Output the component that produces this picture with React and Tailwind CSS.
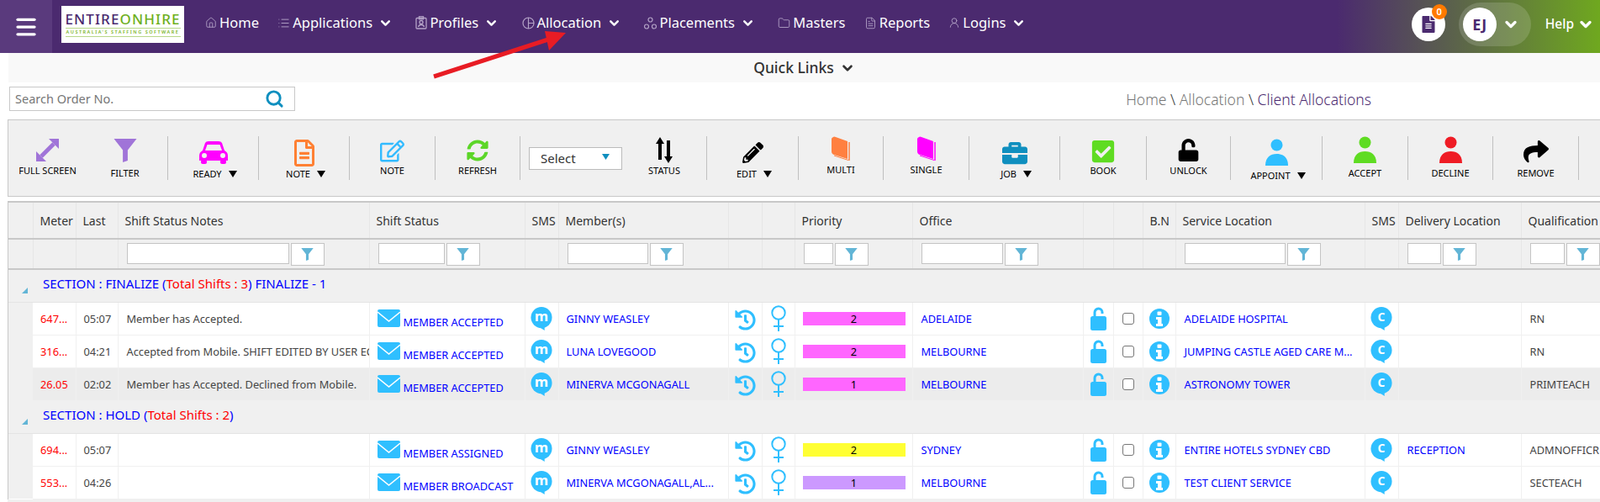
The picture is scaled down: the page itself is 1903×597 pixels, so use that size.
import React from "react";
import { ChevronDown, House, List, Folder, FileText, UserRound, Menu, Search } from "lucide-react";
import { FaRegEdit, FaSyncAlt, FaPencilAlt, FaCheckSquare, FaUnlock, FaShare, FaHistory, FaRegFileAlt, FaFileAlt, FaBriefcase } from "react-icons/fa";

const nav = [
  { t: "Home", i: <House size={14} strokeWidth={1.5} /> },
  { t: "Applications", c: 1, i: <List size={15} strokeWidth={1.5} /> },
  { t: "Profiles", c: 1, i: (
    <svg width="14" height="16" viewBox="0 0 14 16" fill="none" stroke="currentColor" strokeWidth="1.3"><rect x="1" y="2.5" width="12" height="12.5" rx="1" /><rect x="4.5" y="0.8" width="5" height="3" /><circle cx="7" cy="7.5" r="2" /><path d="M3.5 13c.5-2 2-2.5 3.500-2.500s3 .5 3.500 2.500" /></svg>
  ) },
  { t: "Allocation", c: 1, i: (
    <svg width="15" height="15" viewBox="0 0 15 15" fill="none" stroke="currentColor" strokeWidth="1.2"><circle cx="7.500" cy="7.500" r="6.500" /><path d="M7.500 1v13M7.500 7.500h6.500" /></svg>
  ) },
  { t: "Placements", c: 1, i: (
    <svg width="15" height="15" viewBox="0 0 15 15" fill="none" stroke="currentColor" strokeWidth="1.2"><circle cx="7.500" cy="3.500" r="2.500" /><circle cx="3" cy="11.500" r="2.500" /><circle cx="12" cy="11.500" r="2.500" /></svg>
  ) },
  { t: "Masters", i: <Folder size={15} strokeWidth={1.4} /> },
  { t: "Reports", i: <FileText size={15} strokeWidth={1.4} /> },
  { t: "Logins", c: 1, i: <UserRound size={14} strokeWidth={1.5} /> },
];

function Caret() {
  return <svg width="10" height="8" viewBox="0 0 10 8" className="ml-[8px] shrink-0"><path d="M0 0h10L5 8z" fill="#000" /></svg>;
}

function Funnel({ size = 28, color = "#a074d8" }) {
  return (
    <svg width={size} height={size} viewBox="0 0 28 29"><path d="M0 0h28L17 14v13l-6 2V14z" fill={color} /></svg>
  );
}

function Person({ color }) {
  return (
    <svg width="27" height="32" viewBox="0 0 27 32"><circle cx="13.500" cy="7.500" r="7" fill={color} /><path d="M0 32c0-10 6-14 13.500-14S27 22 27 32z" fill={color} /></svg>
  );
}

function Book({ color }) {
  return (
    <svg width="22" height="29" viewBox="0 0 22 29">
      <path d="M2 1Q3 0 5 1L19 6V27L3 22Q0 21 0 18V3Q0 2 2 1z" fill={color} />
      <path d="M21 7V29" stroke={color} strokeWidth="1.500" />
      <path d="M3 23L20 28.500" stroke={color} strokeWidth="1" />
    </svg>
  );
}

function Car() {
  return (
    <svg width="34" height="27" viewBox="0 0 34 27">
      <path d="M7 2Q8 0 11 0H23Q26 0 27 2L30 11Q34 13 34 17V23H0V17Q0 13 4 11z" fill="#ff00ff" />
      <path d="M9.500 4H24.500L27 11H7z" fill="#f0f0f0" />
      <circle cx="6" cy="17" r="3" fill="#f0f0f0" />
      <circle cx="28" cy="17" r="3" fill="#f0f0f0" />
      <rect x="2" y="22" width="7" height="5" rx="2" fill="#ff00ff" />
      <rect x="25" y="22" width="7" height="5" rx="2" fill="#ff00ff" />
    </svg>
  );
}

function Tool({ label, h, pt = "", caret, icon }) {
  return (
    <div className="flex flex-col items-center w-full">
      <div className={`flex justify-center ${h} ${pt}`}>{icon}</div>
      <div className={`flex items-center h-[14px] text-[11px] leading-[14px] text-black whitespace-nowrap ${caret ? "pl-[4px]" : ""}`}>
        {label}
        {caret && <Caret />}
      </div>
    </div>
  );
}

const tools = [
  { w: "w-[108px]", label: "READY", h: "h-[38px]", pt: "pt-[6px]", caret: 1, icon: <Car /> },
  { w: "w-[108px]", label: "NOTE", h: "h-[38px]", pt: "pt-[4px]", caret: 1, icon: <FaRegFileAlt size={32} color="#ff8033" /> },
  { w: "w-[102px]", label: "NOTE", h: "h-[34px]", pt: "pt-[3px]", icon: <FaRegEdit size={29} color="#33bbff" /> },
  { w: "w-[101px]", label: "REFRESH", h: "h-[34px]", pt: "pt-[4px]", icon: <FaSyncAlt size={26} color="#5cd628" /> },
];
const tools2 = [
  { w: "w-[109px]", label: "EDIT", h: "h-[38px]", pt: "pt-[7px]", caret: 1, icon: <FaPencilAlt size={25} color="#000" /> },
  { w: "w-[101px]", label: "MULTI", h: "h-[33px]", pt: "pt-[0px]", icon: <Book color="#ff8040" /> },
  { w: "w-[102px]", label: "SINGLE", h: "h-[33px]", pt: "pt-[0px]", icon: <Book color="#ff00ff" /> },
  { w: "w-[108px]", label: "JOB", h: "h-[38px]", pt: "pt-[5px]", caret: 1, icon: <FaBriefcase size={30} color="#0f8fbf" /> },
  { w: "w-[103px]", label: "BOOK", h: "h-[34px]", pt: "pt-[3px]", icon: <FaCheckSquare size={30} color="#5fdc22" /> },
  { w: "w-[100px]", label: "UNLOCK", h: "h-[34px]", pt: "pt-[3px]", icon: <FaUnlock size={27} color="#000" /> },
  { w: "w-[109px]", label: "APPOINT", h: "h-[40px]", pt: "pt-[3px]", caret: 1, icon: <Person color="#2fbfff" /> },
  { w: "w-[102px]", label: "ACCEPT", h: "h-[37px]", pt: "pt-[0px]", icon: <Person color="#5fdc22" /> },
  { w: "w-[101px]", label: "DECLINE", h: "h-[37px]", pt: "pt-[0px]", icon: <Person color="#ef1c25" /> },
  { w: "w-[102px]", label: "REMOVE", h: "h-[37px]", pt: "pt-[3px]", icon: <FaShare size={30} color="#000" /> },
];

const cols = [29, 51, 50, 299, 185, 40, 202, 40, 39, 140, 203, 36, 35, 39, 225, 40, 146, 111];
const heads = ["", "Meter", "Last", "Shift Status Notes", "Shift Status", "SMS", "Member(s)", "", "", "Priority", "Office", "", "", "B.N", "Service Location", "SMS", "Delivery Location", "Qualification"];
const filters = { 3: "w-[193px]", 4: "w-[79px]", 6: "w-[96px]", 9: "w-[35px]", 10: "w-[97px]", 14: "w-[120px]", 16: "w-[40px]", 17: "w-[41px]" };

function FilterBox({ w }) {
  return (
    <div className="flex items-start gap-[2px] pl-[10px]">
      <div className={`${w} h-[25px] bg-white border border-[#c4c4c4] shrink-0`} />
      <div className="w-[40px] h-[27px] bg-white border border-[#c4c4c4] shrink-0 flex items-center justify-center">
        <Funnel size={15} color="#62b5d6" />
      </div>
    </div>
  );
}

function Bubble({ letter, size }) {
  return (
    <svg width="26" height="28" viewBox="0 0 28 30" className="shrink-0">
      <circle cx="14" cy="13.500" r="13.500" fill="#2fbfff" />
      <path d="M10 25l8 5v-6z" fill="#2fbfff" />
      <text x="14" y="18.500" textAnchor="middle" fill="#fff" fontFamily="'Open Sans', sans-serif" fontWeight="700" fontSize={size}>{letter}</text>
    </svg>
  );
}

function Mail() {
  return (
    <svg width="27" height="21" viewBox="0 0 27 21" className="shrink-0">
      <rect width="27" height="21" rx="2" fill="#2fbfff" />
      <path d="M0 3l13.500 11L27 3" fill="none" stroke="#fff" strokeWidth="1.600" />
    </svg>
  );
}

function Lock() {
  return (
    <svg width="19" height="28" viewBox="0 0 19 28">
      <path d="M5 13V6.500a4.500 4.500 0 0 1 9 0V8" fill="none" stroke="#2fbfff" strokeWidth="3" />
      <rect y="11" width="19" height="17" rx="2.500" fill="#2fbfff" />
    </svg>
  );
}

function Info() {
  return (
    <svg width="24" height="24" viewBox="0 0 24 24">
      <circle cx="12" cy="12" r="12" fill="#2fbfff" />
      <rect x="9.500" y="3.500" width="5" height="4.500" rx="1" fill="#fff" />
      <path d="M8 10h6.500v8H16v3H8v-3h2v-5H8z" fill="#fff" />
    </svg>
  );
}

function Female() {
  return (
    <svg width="18" height="31" viewBox="0 0 18 31" fill="none" stroke="#2fbfff" strokeWidth="2">
      <circle cx="9" cy="9" r="7.700" />
      <path d="M9 17V31M3 25H15" />
    </svg>
  );
}

const linkC = "text-[#0000ff]";
const bodyC = "text-[#444]";

function Row({ r }) {
  const td = "border-r border-b border-[#f0f0f0] p-0 h-[39px] overflow-hidden whitespace-nowrap align-middle";
  const bg = r.hi ? "bg-[#ececec]" : "bg-white";
  return (
    <tr className={bg}>
      <td className="bg-[#f0f0f0] p-0" />
      <td className={`${td} pl-[9px] text-[#ff0000]`}>{r.m}</td>
      <td className={`${td} pl-[9px] ${bodyC}`}>{r.l}</td>
      <td className={`${td} pl-[10px] ${bodyC}`}>{r.n}</td>
      <td className={td}>
        <div className={`flex items-end pl-[9px] gap-[4px] ${linkC}`}>
          <Mail />
          <span className="leading-[15px] -mb-[2px]">{r.s}</span>
        </div>
      </td>
      <td className={td}><div className="flex justify-center"><Bubble letter="m" size="18" /></div></td>
      <td className={`${td} pl-[9px] ${linkC}`}>{r.mem}</td>
      <td className={td}><div className="flex justify-center pt-[4px] text-[#2fbfff]"><FaHistory size={25} /></div></td>
      <td className={td}><div className="flex justify-center"><Female /></div></td>
      <td className={`${td} pl-[9px]`}>
        <div className={`w-[122px] h-[16px] leading-[16px] text-center ${r.c}`}>{r.p}</div>
      </td>
      <td className={`${td} pl-[10px] ${linkC}`}>{r.o}</td>
      <td className={td}><div className="flex justify-center"><Lock /></div></td>
      <td className={td}><div className="flex justify-center"><div className="w-[14px] h-[14px] rounded-[3px] border border-[#777] bg-white" /></div></td>
      <td className={td}><div className="flex justify-center"><Info /></div></td>
      <td className={`${td} pl-[10px] ${linkC}`}>{r.loc}</td>
      <td className={td}><div className="flex justify-center"><Bubble letter="C" size="15" /></div></td>
      <td className={`${td} pl-[10px] ${linkC}`}>{r.d}</td>
      <td className={`${td} pl-[10px] ${bodyC}`}>{r.q}</td>
    </tr>
  );
}

function Section({ name, total, extra }) {
  return (
    <tr className="bg-[#f0f0f0]">
      <td colSpan={18} className="p-0 h-[39px] border-b border-[#e4e4e4]">
        <div className="relative pl-[41px] text-[15px] text-[#0000ff] whitespace-nowrap pb-[6px]">
          <svg width="7" height="7" viewBox="0 0 7 7" className="absolute left-[16px] top-[13px]"><path d="M7 0v7H0z" fill="#62b5d6" /></svg>
          SECTION : {name} (<span className="text-[#ff0000]">Total Shifts : {total}</span>){extra}
        </div>
      </td>
    </tr>
  );
}

const rowsA = [
  { m: "647...", l: "05:07", n: "Member has Accepted.", s: "MEMBER ACCEPTED", mem: "GINNY WEASLEY", p: 2, c: "bg-[#ff66ff]", o: "ADELAIDE", loc: "ADELAIDE HOSPITAL", d: "", q: "RN" },
  { m: "316...", l: "04:21", n: "Accepted from Mobile. SHIFT EDITED BY USER ECHO", s: "MEMBER ACCEPTED", mem: "LUNA LOVEGOOD", p: 2, c: "bg-[#ff66ff]", o: "MELBOURNE", loc: "JUMPING CASTLE AGED CARE M...", d: "", q: "RN" },
  { m: "26.05", l: "02:02", n: "Member has Accepted. Declined from Mobile.", s: "MEMBER ACCEPTED", mem: "MINERVA MCGONAGALL", p: 1, c: "bg-[#ff66ff]", o: "MELBOURNE", loc: "ASTRONOMY TOWER", d: "", q: "PRIMTEACH", hi: 1 },
];
const rowsB = [
  { m: "694...", l: "05:07", n: "", s: "MEMBER ASSIGNED", mem: "GINNY WEASLEY", p: 2, c: "bg-[#ffff33]", o: "SYDNEY", loc: "ENTIRE HOTELS SYDNEY CBD", d: "RECEPTION", q: "ADMNOFFICR" },
  { m: "553...", l: "04:26", n: "", s: "MEMBER BROADCAST", mem: "MINERVA MCGONAGALL,AL...", p: 1, c: "bg-[#cc99ff]", o: "MELBOURNE", loc: "TEST CLIENT SERVICE", d: "", q: "SECTEACH" },
];

export default function App() {
  return (
    <div className="relative w-[1903px] h-[597px] overflow-hidden bg-white font-['Open_Sans',sans-serif]">
      {/* top bar */}
      <header className="flex items-center h-[63px] pb-[5px] text-white bg-[linear-gradient(90deg,#4b2a6f_0,#4b2a6f_1590px,#6fa81f_1903px)]">
        <div className="self-start w-[62px] h-[63px] bg-[#5a3a7d] flex items-center justify-center shrink-0">
          <Menu size={30} strokeWidth={2.6} />
        </div>
        <div className="ml-[11px] w-[146px] h-[44px] bg-white shrink-0 flex flex-col items-center justify-center font-['Inter',sans-serif]">
          <div className="text-[17px] leading-[15px] font-medium tracking-[1.1px] whitespace-nowrap">
            <span className="text-[#4b2a6f]">ENTIRE</span><span className="text-[#6fb01e]">ONHIRE</span>
          </div>
          <div className="mt-[3px] w-[137px] border-y border-[#b8d88a] text-[5.5px] leading-[9px] tracking-[1.5px] text-[#7cb52a] text-center font-semibold whitespace-nowrap">AUSTRALIA'S STAFFING SOFTWARE</div>
        </div>
        <nav className="ml-[25px] mb-[4px] flex items-center gap-[22.300px] font-['Inter',sans-serif] text-[16.500px]">
          {nav.map((n) => (
            <div key={n.t} className={`flex items-center gap-[3px] ${n.c ? "pr-[5px]" : ""}`}>
              <span className="text-[#b4a3c7] flex items-center">{n.i}</span>
              <span>{n.t}</span>
              {n.c && <ChevronDown size={17} strokeWidth={3.5} className="ml-[4px]" />}
            </div>
          ))}
        </nav>
        <div className="ml-auto flex items-center font-['Inter',sans-serif]">
          <div className="relative w-[40px] h-[40px] rounded-full bg-white flex items-center justify-center text-[#4b2a6f]">
            <FaFileAlt size={20} />
            <span className="absolute -top-[4px] -right-[2px] w-[18px] h-[18px] rounded-full bg-[#ff7a00] text-white text-[11px] font-semibold leading-[18px] text-center">0</span>
          </div>
          <div className="ml-[16px] w-[86px] h-[52px] rounded-[26px] bg-white/15 flex items-center pl-[5px]">
            <div className="w-[40px] h-[40px] rounded-full bg-white text-[#4b2a6f] text-[18px] font-bold flex items-center justify-center">EJ</div>
            <ChevronDown size={20} strokeWidth={4} className="ml-[7px]" />
          </div>
          <div className="ml-[17px] mr-[7px] mb-[1px] flex items-center gap-[4px] text-[15.500px] font-medium">
            Help <ChevronDown size={20} strokeWidth={4} />
          </div>
        </div>
      </header>

      {/* quick links */}
      <div className="ml-[10px] h-[35px] bg-[#f9f9f9] flex items-center justify-center gap-[7px] font-['Inter',sans-serif] text-[17.500px] font-medium text-[#333]">
        Quick Links <ChevronDown size={18} strokeWidth={3.5} />
      </div>

      {/* search + breadcrumb */}
      <div className="flex items-start justify-between h-[44px] pt-[5px] pl-[11px] pr-[272px]">
        <div className="w-[340px] h-[29px] border border-[#c8c8c8] flex items-center justify-between pl-[6px] pr-[12px] text-[14.500px] text-[#777]">
          Search Order No.
          <Search size={23} strokeWidth={3} color="#0f8fbf" />
        </div>
        <div className="mt-[2px] text-[17.500px] leading-[26px] font-['Inter',sans-serif] font-light whitespace-nowrap">
          <span className="text-[#777]">Home</span> <span className="text-[#333]">\</span> <span className="text-[#777]">Allocation</span> <span className="text-[#333]">\</span> <span className="text-[#4b2a6f]">Client Allocations</span>
        </div>
      </div>

      {/* toolbar */}
      <div className="ml-[9px] h-[92px] bg-[#f0f0f0] border-y border-l border-[#c8c8c8] pt-[19px] flex items-start">
        <div className="w-[189px] h-[52px] flex shrink-0">
          <div className="w-[93px]"><Tool label="FULL SCREEN" h="h-[34px]" pt="pt-[3px]" icon={
            <svg width="27" height="27" viewBox="0 0 27 27" fill="#a074d8">
              <path d="M15 0H27V12z" />
              <path d="M0 15V27H12z" />
              <path d="M21 6L6 21" stroke="#a074d8" strokeWidth="5" />
            </svg>
          } /></div>
          <div className="w-[91px]"><Tool label="FILTER" h="h-[37px]" pt="pt-[3px]" icon={<Funnel />} /></div>
        </div>
        {tools.map((t, i) => (
          <div key={i} className={`${t.w} h-[52px] border-l border-[#c0c0c0] shrink-0`}><Tool {...t} /></div>
        ))}
        <div className="w-[222px] h-[52px] border-l border-[#c0c0c0] shrink-0 flex">
          <div className="ml-[10px] mt-[13px] w-[111px] h-[27px] bg-white border border-[#bbb] flex items-center justify-between pl-[13px] pr-[14px] text-[15px] text-[#333]">
            Select
            <svg width="9" height="7" viewBox="0 0 9 7" className="mb-[5px]"><path d="M0 0h9L4.500 7z" fill="#0f8fbf" /></svg>
          </div>
          <div className="w-[100px]"><Tool label="STATUS" h="h-[34px]" pt="pt-[1px]" icon={
            <svg width="22" height="31" viewBox="0 0 22 31" fill="#000">
              <path d="M6 0L11 8H8V27H4V8H1z" />
              <path d="M16 31L21 23H18V4H14V23H11z" />
            </svg>
          } /></div>
        </div>
        {tools2.map((t, i) => (
          <div key={i} className={`${t.w} h-[52px] border-l border-[#c0c0c0] shrink-0`}><Tool {...t} /></div>
        ))}
        <div className="h-[52px] border-l border-[#c0c0c0]" />
      </div>

      {/* grid */}
      <div className="ml-[9px] mt-[5px] border-l border-[#c8c8c8] w-[1900px] overflow-hidden">
        <table className="table-fixed border-collapse w-[1910px] text-[12.800px] leading-[16px]">
          <colgroup>
            {cols.map((w, i) => <col key={i} style={{ width: w }} />)}
          </colgroup>
          <thead>
            <tr className="bg-[#f0f0f0] border-t-2 border-b-2 border-[#c8c8c8]">
              {heads.map((h, i) => (
                <th key={i} className="h-[44px] pt-[1px] border-r border-[#e6e6e6] font-normal text-left text-[#333] text-[14px] p-0 pl-[8px] whitespace-nowrap font-['Lato',sans-serif]">{h}</th>
              ))}
            </tr>
            <tr className="bg-[#f0f0f0] border-b-2 border-[#c8c8c8]">
              {heads.map((_, i) => (
                <th key={i} className="h-[36px] border-r border-[#e6e6e6] p-0 align-middle font-normal">
                  {filters[i] && <FilterBox w={filters[i]} />}
                </th>
              ))}
            </tr>
          </thead>
          <tbody>
            <Section name="FINALIZE" total={3} extra=" FINALIZE - 1" />
            {rowsA.map((r) => <Row key={r.m} r={r} />)}
            <Section name="HOLD" total={2} />
            {rowsB.map((r) => <Row key={r.m} r={r} />)}
          </tbody>
        </table>
      </div>
      <div className="absolute left-[9px] right-0 bottom-0 h-[3px] bg-[#f0f0f0]" />

      {/* red annotation arrow */}
      <svg className="absolute left-0 top-0 pointer-events-none" width="1903" height="597">
        <path d="M516 91L655 46" stroke="#e81c24" strokeWidth="5" fill="none" />
        <path d="M673 39L648 37L653 60z" fill="#e81c24" />
      </svg>
    </div>
  );
}
